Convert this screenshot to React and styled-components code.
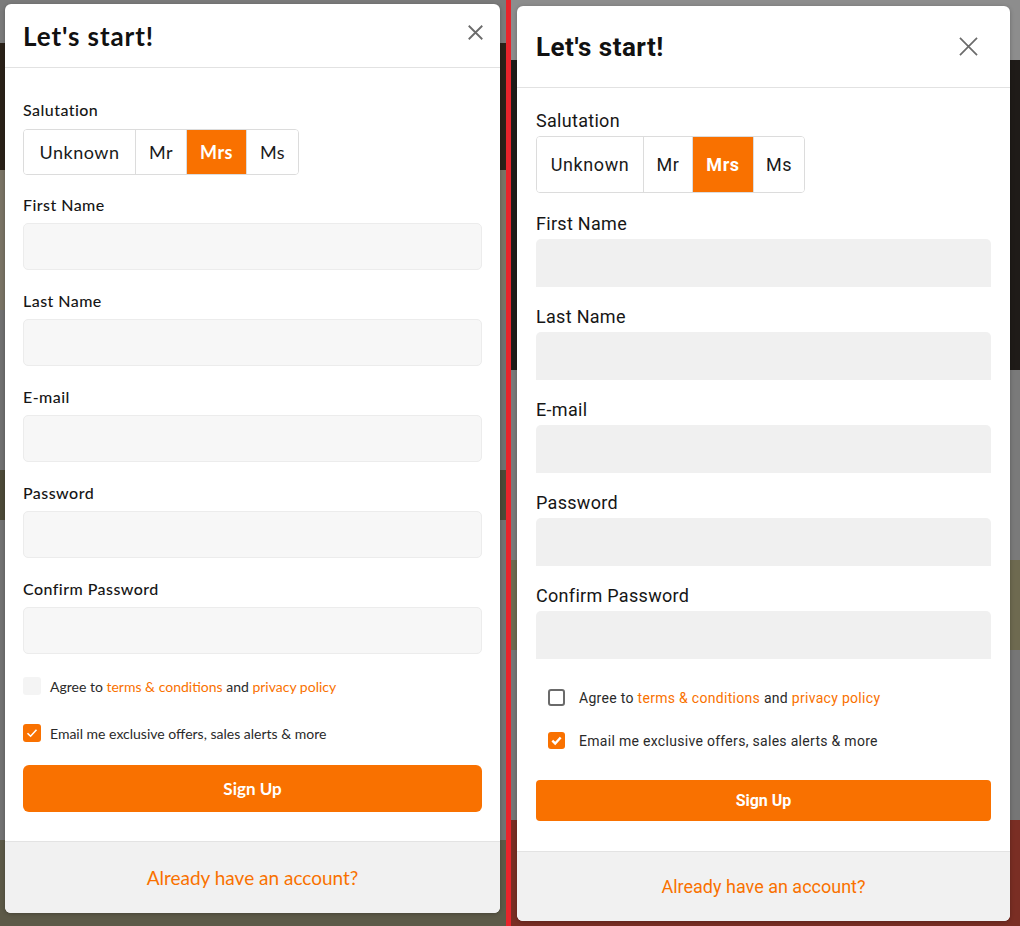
import React from 'react';
import styled, { createGlobalStyle } from 'styled-components';

const GlobalStyle = createGlobalStyle`
    html, body {
        margin: 0;
        padding: 0;
        width: 1020px;
        height: 926px;
        overflow: hidden;
        background: #6d6d6d;
    }
    * {
        box-sizing: border-box;
    }
`

const ORANGE = '#f97100';

// two looks of the same dialog, side by side
const variants = {
    left: {
        font: '"Lato", "Open Sans", sans-serif',
        padTop: 4, padLeft: 5, width: 495, height: 909,
        headerH: 64, titleSize: 26, titleSpacing: 0.9, padX: 18, closeRight: 17, closeSize: 15,
        bodyTop: 32, labelSize: 16, labelWeight: 500, labelSpacing: 0.45, labelGap: 9,
        segH: 46, segWidths: [111, 51, 60, 52], segSize: 18, segSpacing: 0.5, segAfter: 20,
        inputGap: 8, inputH: 47, inputBg: '#f7f7f7', inputBorder: '1px solid #ececec', inputRadius: '5px', fieldAfter: 21,
        checksGap: 23, checkIndent: 0, checkSize: 18, checkBorder: 'none', checkBg: '#f4f4f4', checkTextLeft: 9,
        checkText: 14, checkSpacing: 0,
        checkRow: 47, btnTop: 23, btnH: 47, btnRadius: 6, btnSize: 17,
        footerTop: 29, footerSize: 19, checkStroke: 1.6,
    },
    right: {
        font: '"Roboto", "Liberation Sans", sans-serif',
        padTop: 6, padLeft: 6, width: 493, height: 915,
        headerH: 82, titleSize: 26, titleSpacing: 0.5, padX: 19, closeRight: 32, closeSize: 19,
        bodyTop: 23, labelSize: 18, labelWeight: 400, labelSpacing: 0.3, labelGap: 5,
        segH: 57, segWidths: [106, 49, 61, 51], segSize: 18, segSpacing: 0.6, segAfter: 21,
        inputGap: 5, inputH: 48, inputBg: '#f0f0f0', inputBorder: 'none', inputRadius: '5px 5px 0 0', fieldAfter: 20,
        checksGap: 30, checkIndent: 12, checkSize: 17, checkBorder: '2px solid #6a6a6a', checkBg: '#fff', checkTextLeft: 14,
        checkText: 14, checkSpacing: 0.3,
        checkRow: 43, btnTop: 31, btnH: 41, btnRadius: 4, btnSize: 16,
        footerTop: 30, footerSize: 18, checkStroke: 2.6,
    },
};

const Page = styled.div`
    display: flex;
    width: 1020px;
    height: 926px;
`

const Pane = styled.div`
    flex: ${props => props.side === 'left' ? '0 0 506px' : '1'};
    padding-top: ${props => variants[props.side].padTop}px;
    padding-left: ${props => variants[props.side].padLeft}px;
    background: ${props => props.side === 'left'
        ? 'linear-gradient(#7b7b7b 0 43px, #2b2219 43px 170px, #7a7466 170px 310px, #717171 310px 470px, #4d4a38 470px 520px, #737373 520px 840px, #5d5a48 840px)'
        : 'linear-gradient(#8d8d8d 0 60px, #1f1b18 60px 370px, #7a7a7a 370px 560px, #6e6a50 560px 650px, #767676 650px 820px, #7a2e24 820px 926px)'};
`

const Divider = styled.div`
    flex: 0 0 5px;
    background: #e8242b;
`

const Modal = styled.div`
    width: ${props => props.v.width}px;
    height: ${props => props.v.height}px;
    background: #fff;
    border-radius: 6px;
    box-shadow: 0 1px 4px rgba(0, 0, 0, 0.25);
    overflow: hidden;
    display: flex;
    flex-direction: column;
    font-family: ${props => props.v.font};
    color: #161616;
`

const Header = styled.div`
    height: ${props => props.v.headerH}px;
    flex-shrink: 0;
    display: flex;
    align-items: center;
    justify-content: space-between;
    padding: 0 ${props => props.v.closeRight}px 0 ${props => props.v.padX}px;
    border-bottom: 1px solid #e2e2e2;
`

const Title = styled.h2`
    margin: 0;
    font-size: ${props => props.v.titleSize}px;
    letter-spacing: ${props => props.v.titleSpacing}px;
    font-weight: 700;
    color: #111;
`

const Close = styled.button`
    border: none;
    background: none;
    padding: 0;
    display: flex;
    margin-top: ${props => props.side === 'left' ? -6 : 0}px;
    cursor: pointer;
`

const Body = styled.div`
    flex: 1;
    padding: ${props => props.v.bodyTop}px ${props => props.v.padX}px 0;
    display: flex;
    flex-direction: column;
`

const Label = styled.label`
    display: block;
    font-size: ${props => props.v.labelSize}px;
    letter-spacing: ${props => props.v.labelSpacing}px;
    line-height: 20px;
    font-weight: ${props => props.v.labelWeight};
    color: #161616;
`

const Segments = styled.div`
    display: inline-flex;
    align-self: flex-start;
    margin-top: ${props => props.v.labelGap}px;
    margin-bottom: ${props => props.v.segAfter}px;
    height: ${props => props.v.segH}px;
    border: 1px solid #dcdcdc;
    border-radius: 4px;
    overflow: hidden;
`

const Segment = styled.div`
    display: flex;
    align-items: center;
    justify-content: center;
    width: ${props => props.width}px;
    font-size: ${props => props.v.segSize}px;
    letter-spacing: ${props => props.v.segSpacing}px;
    font-weight: ${props => props.active ? 700 : 400};
    color: ${props => props.active ? '#fff' : '#1a1a1a'};
    background: ${props => props.active ? ORANGE : '#fff'};
    & + & {
        border-left: 1px solid #dcdcdc;
    }
`

const Field = styled.div`
    margin-bottom: ${props => props.v.fieldAfter}px;
`

const Input = styled.input`
    display: block;
    width: 100%;
    height: ${props => props.v.inputH}px;
    margin-top: ${props => props.v.inputGap}px;
    background: ${props => props.v.inputBg};
    border: ${props => props.v.inputBorder};
    border-radius: ${props => props.v.inputRadius};
    outline: none;
`

const CheckRow = styled.div`
    display: flex;
    align-items: center;
    height: ${props => props.v.checkSize}px;
    padding-left: ${props => props.v.checkIndent}px;
    margin-top: ${props => props.first
        ? props.v.checksGap - props.v.fieldAfter
        : props.v.checkRow - props.v.checkSize}px;
    font-size: ${props => props.v.checkText}px;
    letter-spacing: ${props => props.v.checkSpacing}px;
    color: #2a2a2a;
`

const Box = styled.span`
    flex: 0 0 ${props => props.v.checkSize}px;
    height: ${props => props.v.checkSize}px;
    margin-right: ${props => props.v.checkTextLeft}px;
    border-radius: 3px;
    display: flex;
    align-items: center;
    justify-content: center;
    background: ${props => props.checked ? ORANGE : props.v.checkBg};
    border: ${props => props.checked ? 'none' : props.v.checkBorder};
`

const Link = styled.a`
    color: ${ORANGE};
    text-decoration: none;
`

const Button = styled.button`
    margin-top: ${props => props.v.btnTop}px;
    height: ${props => props.v.btnH}px;
    width: 100%;
    border: none;
    border-radius: ${props => props.v.btnRadius}px;
    background: ${ORANGE};
    color: #fff;
    font-family: inherit;
    font-size: ${props => props.v.btnSize}px;
    font-weight: 700;
`

const Footer = styled.div`
    margin-top: ${props => props.v.footerTop}px;
    flex: 1;
    display: flex;
    align-items: center;
    justify-content: center;
    background: #f1f1f1;
    border-top: 1px solid #e3e3e3;
    font-size: ${props => props.v.footerSize}px;
    color: ${ORANGE};
`

const fields = ['First Name', 'Last Name', 'E-mail', 'Password', 'Confirm Password'];
const salutations = ['Unknown', 'Mr', 'Mrs', 'Ms'];

const CloseIcon = ({ size, side }) => (
    <svg width={size} height={size} viewBox="0 0 20 20">
        <path d="M1 1 L19 19 M19 1 L1 19" stroke="#6b6b6b" strokeWidth={side === 'left' ? 2.4 : 1.8} />
    </svg>
);

const Tick = ({ size, stroke }) => (
    <svg width={size - 4} height={size - 4} viewBox="0 0 14 14">
        <path d="M2.5 7.2 L5.6 10.2 L11.5 3.8" fill="none" stroke="#fff" strokeWidth={stroke} />
    </svg>
);

const SignUpDialog = ({ side }) => {
    const v = variants[side];

    return (
        <Modal v={v}>
            <Header v={v}>
                <Title v={v}>Let's start!</Title>
                <Close side={side}><CloseIcon size={v.closeSize} side={side} /></Close>
            </Header>
            <Body v={v}>
                <Label v={v}>Salutation</Label>
                <Segments v={v}>
                    {salutations.map((s, i) => (
                        <Segment key={s} v={v} width={v.segWidths[i]} active={s === 'Mrs'}>{s}</Segment>
                    ))}
                </Segments>
                {fields.map(f => (
                    <Field key={f} v={v}>
                        <Label v={v}>{f}</Label>
                        <Input v={v} type={f.includes('Password') ? 'password' : 'text'} />
                    </Field>
                ))}
                <CheckRow v={v} first>
                    <Box v={v} />
                    <span>Agree to <Link>terms &amp; conditions</Link> and <Link>privacy policy</Link></span>
                </CheckRow>
                <CheckRow v={v}>
                    <Box v={v} checked><Tick size={v.checkSize} stroke={v.checkStroke} /></Box>
                    <span>Email me exclusive offers, sales alerts &amp; more</span>
                </CheckRow>
                <Button v={v}>Sign Up</Button>
            </Body>
            <Footer v={v}>Already have an account?</Footer>
        </Modal>
    );
}

const App = () => (
    <>
        <GlobalStyle />
        <Page>
            <Pane side="left"><SignUpDialog side="left" /></Pane>
            <Divider />
            <Pane side="right"><SignUpDialog side="right" /></Pane>
        </Page>
    </>
);

export default App;
